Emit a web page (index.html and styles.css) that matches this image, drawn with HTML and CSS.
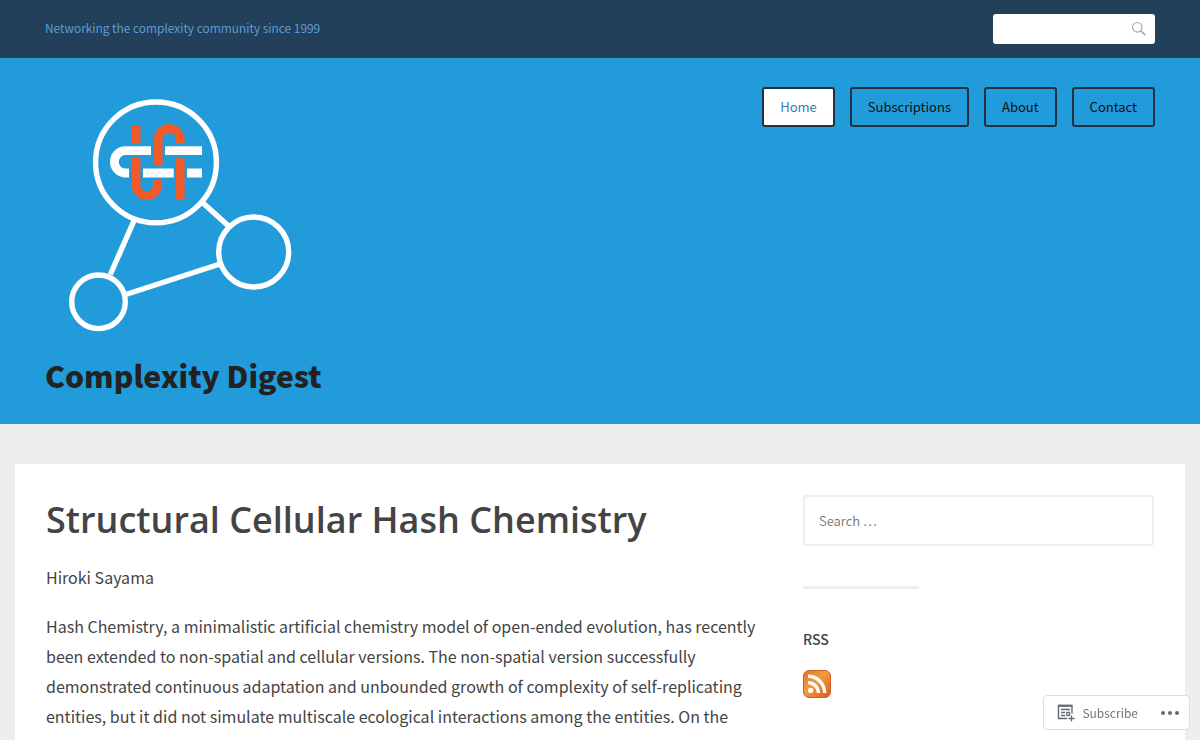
FILE: index.html
```html
<!DOCTYPE html>
<html lang="en">
<head>
  <meta charset="UTF-8" />
  <meta name="viewport" content="width=device-width, initial-scale=1.0" />
  <title>Complexity Digest</title>
  <link rel="stylesheet" href="styles.css">
</head>
<body>
  <!-- Top bar -->
  <div class="top-bar">
    <p class="tagline">Networking the complexity community since 1999</p>
    <form class="top-search" role="search">
      <input type="search" aria-label="Search" />
      <svg class="search-icon" viewBox="0 0 16 16" aria-hidden="true">
        <circle cx="6.3" cy="6.3" r="4.8" />
        <path d="M9.8 9.8L14.3 14.2" stroke-width="1.8" />
      </svg>
    </form>
  </div>

  <!-- Site header -->
  <header class="site-header">
    <div class="branding">
      <a class="logo-link" href="#" aria-label="Complexity Digest">
        <svg class="logo" viewBox="45 88 270 254" aria-hidden="true">
          <g fill="none" stroke="#fff" stroke-width="5.4">
            <circle cx="156" cy="162.4" r="60.4" />
            <circle cx="253.7" cy="252" r="35" />
            <circle cx="98.5" cy="301.8" r="26.8" />
            <path d="M134.3 220L110.3 274.5M203 203L228.5 226M126.5 294.2L220 264" />
          </g>
          <!-- woven knot -->
          <g fill="none" stroke="#fff" stroke-width="8.8">
            <path d="M151 150.7H124.5A11.2 11.2 0 0 0 124.5 173H129" />
            <path d="M165 150.7H202M143 173H173.7M187 173H202" />
          </g>
          <g fill="none" stroke="#f15a29" stroke-width="8.8">
            <path d="M136.1 125.3V144M136.1 157.7V185A10.7 10.7 0 0 0 157.5 185V180" />
            <path d="M158.2 165.7V139.4A11 11 0 0 1 180.2 139.4V144M180.2 158.3V200" />
          </g>
        </svg>
      </a>
      <h1 class="site-title">Complexity Digest</h1>
    </div>
    <nav class="main-nav">
      <a class="current" href="#">Home</a>
      <a href="#">Subscriptions</a>
      <a href="#">About</a>
      <a href="#">Contact</a>
    </nav>
  </header>

  <!-- Content -->
  <div class="content">
    <main class="posts">
      <article>
        <h2 class="entry-title">Structural Cellular Hash Chemistry</h2>
        <p>Hiroki Sayama</p>
        <p>Hash Chemistry, a minimalistic artificial chemistry model of open-ended evolution, has recently been extended to non-spatial and cellular versions. The non-spatial version successfully demonstrated continuous adaptation and unbounded growth of complexity of self-replicating entities, but it did not simulate multiscale ecological interactions among the entities. On the contrary, the cellular version explicitly represented multiscale spatial ecological interactions</p>
      </article>
    </main>
    <aside class="sidebar">
      <form class="widget" role="search">
        <input class="search-field" type="search" placeholder="Search …" aria-label="Search" />
      </form>
      <section class="widget">
        <h3 class="widget-title">RSS</h3>
        <a class="rss-link" href="#" aria-label="RSS">
          <svg class="rss-icon" viewBox="0 0 28 28" aria-hidden="true">
            <defs>
              <linearGradient id="rss-fill" x1="0" y1="0" x2="1" y2="1">
                <stop offset="0" stop-color="#e2762c" />
                <stop offset="0.45" stop-color="#f59a3e" />
                <stop offset="1" stop-color="#d9571f" />
              </linearGradient>
            </defs>
            <rect x="0.5" y="0.5" width="27" height="27" rx="5.5" fill="url(#rss-fill)" stroke="#cf6326" />
            <circle cx="7.6" cy="20.4" r="2.6" fill="#fff" />
            <path d="M5 12.6A10.4 10.4 0 0 1 15.4 23M5 6.3A16.7 16.7 0 0 1 21.7 23" fill="none" stroke="#fff" stroke-width="3.4" />
          </svg>
        </a>
      </section>
    </aside>
  </div>

  <!-- Floating subscribe bar -->
  <div class="action-bar">
    <button class="subscribe" type="button">
      <svg viewBox="0 0 18 18" aria-hidden="true">
        <path d="M15 9.5V1.5H1.5V14.5H10" stroke-width="1.4" />
        <path d="M1.5 1.8H15" stroke-width="2" />
        <path d="M4 5.5H13M4 8.5H8M4 11.5H8M9.8 8.4H12.5V11.4H9.8ZM14.5 11.5V17.5M11.5 14.5H17.5" stroke-width="1.3" />
      </svg>
      Subscribe
    </button>
    <button class="more" type="button" aria-label="More">
      <svg viewBox="0 0 20 6" aria-hidden="true">
        <circle cx="3" cy="3" r="2" />
        <circle cx="10" cy="3" r="2" />
        <circle cx="17" cy="3" r="2" />
      </svg>
    </button>
  </div>
</body>
</html>
```
FILE: styles.css
```css
* {
  box-sizing: border-box;
}
body {
  margin: 0;
  background-color: #eee;
  color: #444;
  font-family: "Noto Sans CJK SC", "Open Sans", sans-serif;
  font-size: 16px;
  line-height: 30px;
}
a {
  text-decoration: none;
}
input,
button {
  font-family: inherit;
}
/* Top bar */
.top-bar {
  display: flex;
  justify-content: space-between;
  align-items: center;
  padding: 13px 45px 15px;
  background-color: #22405a;
}
.tagline {
  margin: 0;
  color: #61a5dc;
  font-size: 12px;
  font-weight: 350;
}
.top-search {
  position: relative;
  width: 162px;
  height: 30px;
}
.top-search input {
  display: block;
  width: 100%;
  height: 30px;
  margin: 1px 0 0;
  padding: 0 30px 0 8px;
  border: none;
  border-radius: 3px;
  background: #fff;
}
.search-icon {
  position: absolute;
  top: 8px;
  right: 8px;
  width: 16px;
  height: 16px;
  fill: none;
  stroke: #aaa;
  stroke-width: 1.2;
}
/* Header */
.site-header {
  display: flex;
  justify-content: space-between;
  align-items: flex-start;
  padding: 29px 45px;
  background-color: #219bd9;
}
.logo {
  display: block;
  width: 270px;
  height: 254px;
  margin-top: 1px;
}
.site-title {
  margin: 13px 0 0;
  color: #222;
  font-size: 30px;
  font-weight: 900;
  line-height: 40px;
}
.main-nav {
  display: flex;
  gap: 15px;
}
.main-nav a {
  padding: 3px 16px;
  border: 2px solid #22313f;
  border-radius: 3px;
  color: #111;
  font-size: 13px;
}
.main-nav .current {
  background: #fff;
  color: #337ab7;
}
/* Content */
.content {
  display: flex;
  gap: 38px;
  margin: 40px 15px;
  padding: 31px;
  background: #fff;
  border-radius: 3px;
}
.posts {
  flex: 1;
}
.posts p {
  margin: 0 0 19px;
}
.entry-title {
  margin: 0 0 17px;
  font-family: "Open Sans", sans-serif;
  font-size: 36px;
  font-weight: 600;
  line-height: 50px;
}
/* Sidebar */
.sidebar {
  width: 351px;
}
.widget + .widget {
  margin-top: 40px;
}
.widget + .widget::before {
  content: "";
  display: block;
  width: 33%;
  height: 3px;
  background: #eee;
}
.search-field {
  display: block;
  width: 100%;
  height: 51px;
  padding: 0 14px;
  border: 2px solid #eee;
  border-radius: 3px;
  background: #fff;
  font-size: 13px;
  font-weight: 350;
}
.search-field::placeholder {
  color: #757575;
}
.widget-title {
  margin: 35px 0 16px;
  font-size: 14px;
  font-weight: 500;
}
.rss-icon {
  display: block;
  width: 28px;
  height: 28px;
}
/* Floating bar */
.action-bar {
  position: fixed;
  right: 10px;
  bottom: 10px;
  display: flex;
  align-items: center;
  height: 35px;
  border: 1px solid #ddd;
  border-radius: 4px;
  background: #fff;
}
.action-bar button {
  display: flex;
  align-items: center;
  border: none;
  background: none;
  color: #757575;
  font-size: 12px;
}
.action-bar .subscribe {
  gap: 7px;
  padding: 0 13px;
}
.subscribe svg {
  width: 18px;
  height: 18px;
  fill: none;
  stroke: #646970;
}
.action-bar .more {
  padding: 0 9px;
}
.more svg {
  width: 20px;
  height: 6px;
  fill: #646970;
}
```
